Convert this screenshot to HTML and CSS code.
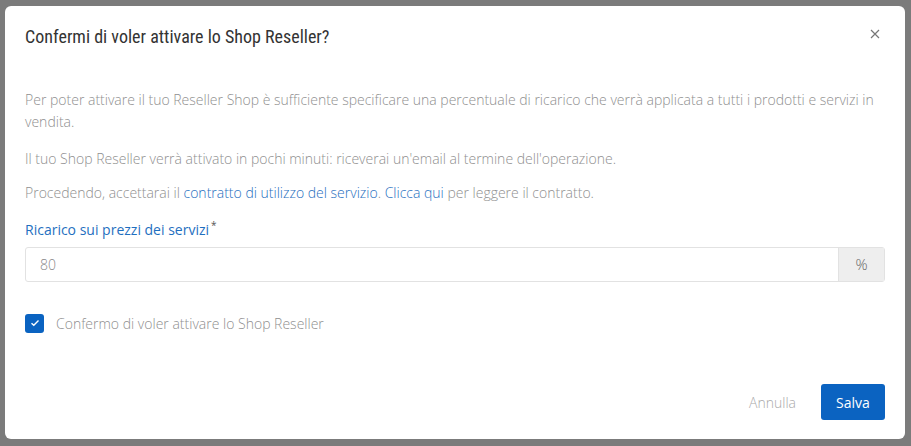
FILE: index.html
```html
<!DOCTYPE html>
<html lang="it">
<head>
<meta charset="utf-8">
<title>Shop Reseller</title>
<link rel="stylesheet" href="styles.css">
</head>
<body>
<div class="modal">
  <div class="modal-header">
    <h4 class="modal-title">Confermi di voler attivare lo Shop Reseller?</h4>
    <button class="close" aria-label="Chiudi">
      <svg width="10" height="10" viewBox="0 0 10 10"><path d="M1 1L9 9M9 1L1 9" stroke="#777" stroke-width="1.2" fill="none"/></svg>
    </button>
  </div>
  <div class="modal-body">
    <p class="p1">Per poter attivare il tuo Reseller Shop è sufficiente specificare una percentuale di ricarico che verrà applicata a tutti i prodotti e servizi in vendita.</p>
    <p class="p2">Il tuo Shop Reseller verrà attivato in pochi minuti: riceverai un'email al termine dell'operazione.</p>
    <p class="p3">Procedendo, accettarai il <a href="#">contratto di utilizzo del servizio</a>. <a href="#">Clicca qui</a> per leggere il contratto.</p>
    <label class="field-label">Ricarico sui prezzi dei servizi<sup>*</sup></label>
    <div class="input-group">
      <div class="input">80</div>
      <div class="addon">%</div>
    </div>
    <div class="check-row">
      <span class="checkbox">
        <svg width="10" height="8" viewBox="0 0 10 8"><path d="M1.5 4.2L3.8 6.3L8.5 1.6" stroke="#fff" stroke-width="1.4" fill="none"/></svg>
      </span>
      <span class="check-label">Confermo di voler attivare lo Shop Reseller</span>
    </div>
  </div>
  <div class="modal-footer">
    <button class="btn-link">Annulla</button>
    <button class="btn-primary">Salva</button>
  </div>
</div>
</body>
</html>
```
FILE: styles.css
```css
html, body {
  margin: 0;
  height: 100%;
}
body {
  background: #7b7b7b;
  padding: 6px 6px 7px 5px;
  box-sizing: border-box;
  font-family: "Open Sans", sans-serif;
}
.modal {
  width: 900px;
  height: 433px;
  background: #fff;
  border-radius: 6px;
  display: flex;
  flex-direction: column;
  box-sizing: border-box;
}
.modal-header {
  display: flex;
  justify-content: space-between;
  align-items: flex-start;
  padding: 19px 24px 0 20px;
}
.modal-title {
  margin: 0;
  font-family: "Roboto Condensed", "Roboto", sans-serif;
  font-stretch: 80%;
  font-weight: 400;
  font-size: 18px;
  line-height: 24px;
  color: #333;
}
.close {
  border: 0;
  background: none;
  padding: 0;
  margin-top: 3px;
  width: 12px;
  height: 12px;
  display: flex;
  align-items: center;
  justify-content: center;
}
.modal-body {
  padding: 40px 20px 0 20px;
}
.modal-body p {
  margin: 0;
  font-size: 14px;
  font-weight: 300;
  line-height: 22px;
  color: #8f8f8f;
}
.p1 { margin-bottom: 15px !important; }
.p2 { margin-bottom: 12px !important; }
.p3 { margin-bottom: 10px !important; }
.modal-body a {
  color: #1f6fc0;
  text-decoration: none;
}
.field-label {
  display: block;
  font-size: 14px;
  line-height: 22px;
  color: #1f6fc0;
  margin-bottom: 6px;
}
.field-label sup {
  color: #555;
  font-size: 10px;
  margin-left: 2px;
}
.input-group {
  display: flex;
  height: 35px;
  border: 1px solid #e2e2e2;
  border-radius: 3px;
  box-sizing: border-box;
}
.input {
  flex: 1;
  padding-left: 14px;
  display: flex;
  align-items: center;
  font-size: 14px;
  font-weight: 300;
  color: #888;
}
.addon {
  width: 45px;
  background: #eee;
  border-left: 1px solid #e2e2e2;
  display: flex;
  align-items: center;
  justify-content: center;
  font-size: 15px;
  font-weight: 300;
  color: #666;
}
.check-row {
  display: flex;
  align-items: center;
  margin-top: 32px;
  gap: 12px;
}
.checkbox {
  width: 19px;
  height: 19px;
  background: #0a63c1;
  border-radius: 3px;
  display: flex;
  align-items: center;
  justify-content: center;
}
.check-label {
  font-size: 14px;
  font-weight: 300;
  color: #8f8f8f;
}
.modal-footer {
  margin-top: auto;
  display: flex;
  justify-content: flex-end;
  align-items: center;
  gap: 25px;
  padding: 0 20px 19px 20px;
}
.btn-link {
  border: 0;
  background: none;
  font-family: "Open Sans", sans-serif;
  font-size: 14px;
  font-weight: 300;
  color: #aaa;
  padding: 0;
}
.btn-primary {
  border: 0;
  background: #0b63c1;
  color: #fff;
  font-family: "Open Sans", sans-serif;
  font-size: 14px;
  width: 64px;
  height: 36px;
  border-radius: 3px;
}
```
